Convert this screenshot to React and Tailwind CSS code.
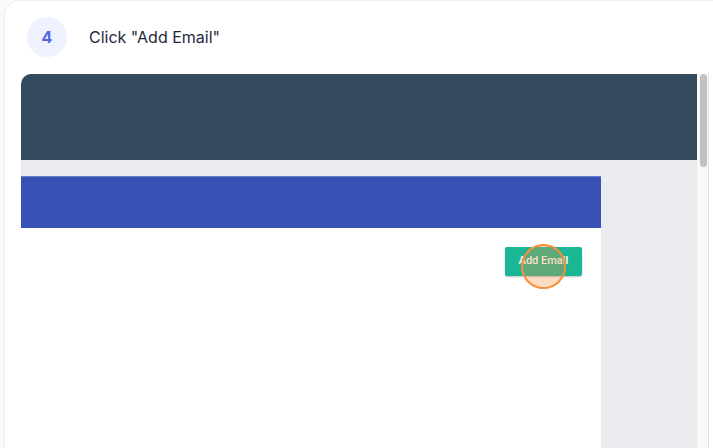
export default function App() {
  return (
    <div className="w-[713px] h-[448px] overflow-hidden bg-[#f8f9fb] pl-[4px]" style={{ fontFamily: 'Inter, "Noto Sans", sans-serif' }}>
      <div className="h-[460px] bg-white rounded-tl-[16px] border-l border-t border-[#eceef2] pt-[16px] pl-[16px]">
        <div className="flex items-center gap-[22px] pl-[6px]">
          <div className="w-[40px] h-[40px] rounded-full bg-[#eef1fe] flex items-center justify-center text-[16px] font-bold text-[#5567e0]">4</div>
          <div className="text-[16px] text-[#1f2940]">Click "Add Email"</div>
        </div>
        <div className="mt-[17px] flex h-[400px]">
          <div className="w-[676px] rounded-tl-[10px] overflow-hidden flex flex-col">
            <div className="h-[86px] bg-[#344a5e] shrink-0"></div>
            <div className="flex flex-1 bg-[#e9ebee]">
              <div className="w-[580px] pt-[16px] flex flex-col">
                <div className="h-[52px] bg-[#3752b4] border-t border-[#6a7fcb] shrink-0"></div>
                <div className="flex-1 bg-white flex justify-end pt-[19px] pr-[19px]">
                  <div className="relative h-[29px] w-[77px]">
                    <div className="h-full w-full bg-[#1bb795] rounded-[2px] shadow-[0_1px_2px_rgba(0,0,0,0.25)] flex items-center justify-center text-white text-[11px] font-medium" style={{ fontFamily: 'Roboto, sans-serif' }}>Add Email</div>
                    <div className="absolute left-[16px] top-[-3px] w-[45px] h-[45px] rounded-full border-2 border-[#f78f3b] bg-[rgba(247,140,60,0.3)]"></div>
                  </div>
                </div>
              </div>
              <div className="flex-1"></div>
            </div>
          </div>
          <div className="w-[12px] bg-[#f8f8f8] border-r border-[#e2e2e2] pl-[3px] pr-[1px]">
            <div className="h-[93px] w-[7px] bg-[#c1c1c1] rounded-[4px]"></div>
          </div>
        </div>
      </div>
    </div>
  );
}
